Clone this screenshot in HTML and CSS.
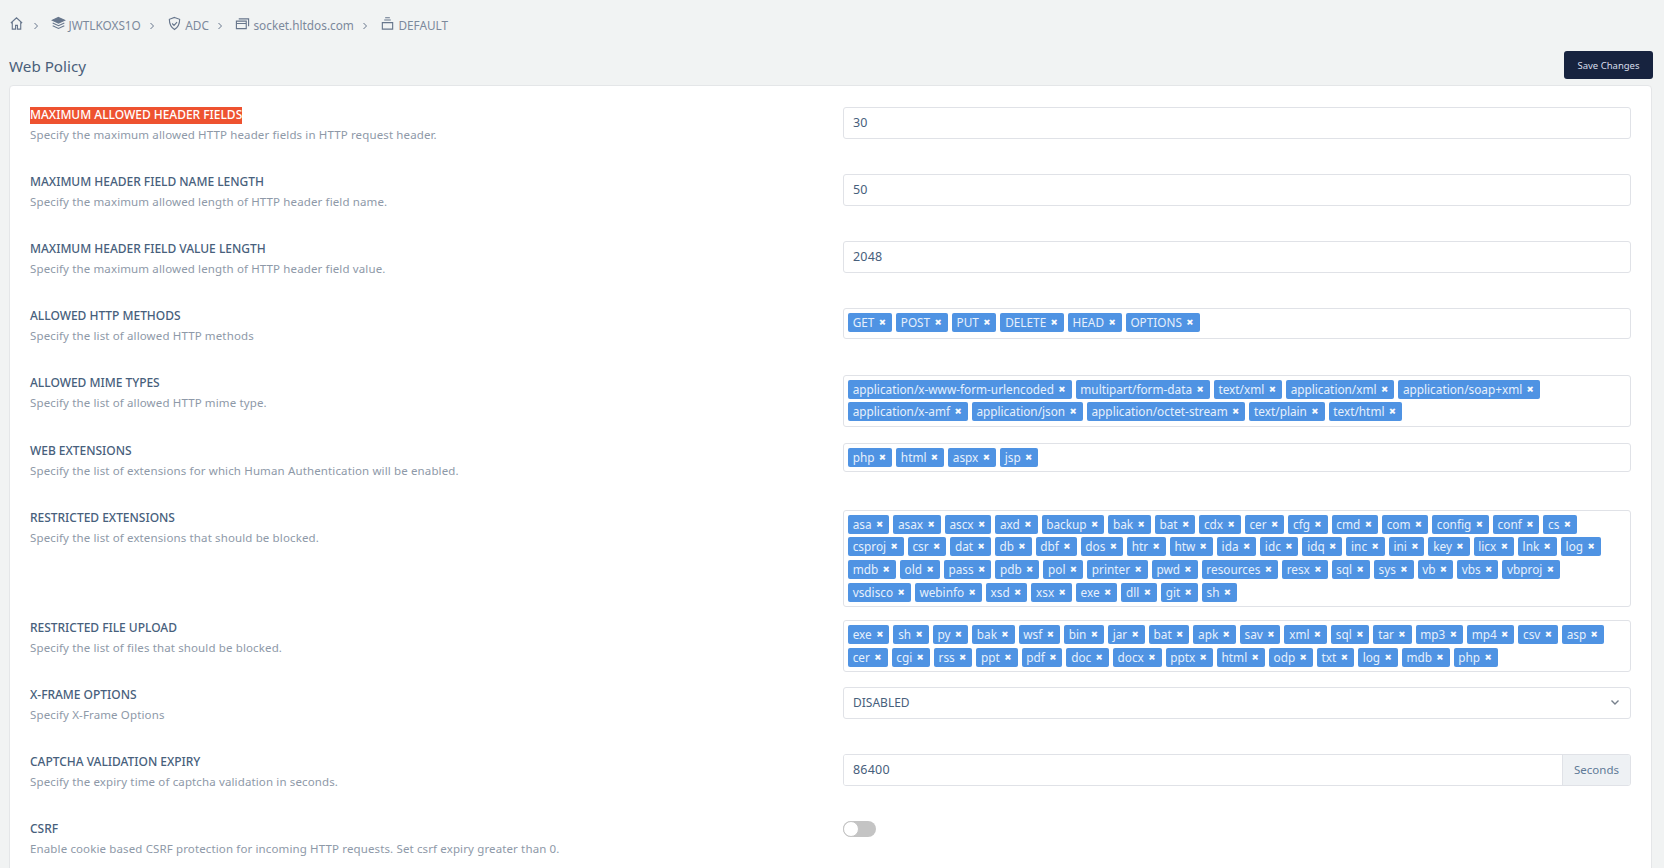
FILE: index.html
```html
<!DOCTYPE html>
<html lang="en">
<head>
<meta charset="utf-8">
<title>Web Policy</title>
<link rel="stylesheet" href="styles.css">
</head>
<body>
<nav class="crumbs">
  <svg class="ic home" viewBox="0 0 16 16"><path d="M2 7.500 8 2l6 5.500M3.500 6.500V14h3.500v-4h2v4h3.500V6.500"/></svg>
  <svg class="sep" viewBox="0 0 6 10"><path d="M1.500 2 4.500 5l-3 3"/></svg>
  <svg class="ic" viewBox="0 0 16 16"><path class="solid" d="M8 1.500 14.500 4.500 8 7.500 1.500 4.500Z"/><path d="M1.800 7.500 8 10.300l6.200-2.800M1.800 10.500 8 13.300l6.200-2.800"/></svg><span>JWTLKOXS1O</span>
  <svg class="sep" viewBox="0 0 6 10"><path d="M1.500 2 4.500 5l-3 3"/></svg>
  <svg class="ic" viewBox="0 0 16 16"><path d="M8 1.500 13.500 3.500c0 5-1.500 8.500-5.500 11-4-2.500-5.500-6-5.500-11ZM5.500 8 7.500 10l3.200-3.500"/></svg><span>ADC</span>
  <svg class="sep" viewBox="0 0 6 10"><path d="M1.500 2 4.500 5l-3 3"/></svg>
  <svg class="ic" viewBox="0 0 16 16"><path d="M1.500 5.500h10.500v8H1.500ZM1.500 8h10.500M4 3h10.500v8"/></svg><span>socket.hltdos.com</span>
  <svg class="sep" viewBox="0 0 6 10"><path d="M1.500 2 4.500 5l-3 3"/></svg>
  <svg class="ic" viewBox="0 0 16 16"><path d="M2.500 7h11v7h-11ZM4.500 4.300h7M5.500 1.800h5"/></svg><span>DEFAULT</span>
</nav>
<header class="head">
  <h1>Web Policy</h1>
  <button class="save">Save Changes</button>
</header>
<main class="card">
  <section class="row">
    <div class="info"><h2><mark>MAXIMUM ALLOWED HEADER FIELDS</mark></h2><p>Specify the maximum allowed HTTP header fields in HTTP request header.</p></div>
    <input class="input" value="30">
  </section>
  <section class="row">
    <div class="info"><h2>MAXIMUM HEADER FIELD NAME LENGTH</h2><p>Specify the maximum allowed length of HTTP header field name.</p></div>
    <input class="input" value="50">
  </section>
  <section class="row">
    <div class="info"><h2>MAXIMUM HEADER FIELD VALUE LENGTH</h2><p>Specify the maximum allowed length of HTTP header field value.</p></div>
    <input class="input" value="2048">
  </section>
  <section class="row">
    <div class="info"><h2>ALLOWED HTTP METHODS</h2><p>Specify the list of allowed HTTP methods</p></div>
    <div class="field tags tags-tall"><span class="tag">GET <b>×</b></span><span class="tag">POST <b>×</b></span><span class="tag">PUT <b>×</b></span><span class="tag">DELETE <b>×</b></span><span class="tag">HEAD <b>×</b></span><span class="tag">OPTIONS <b>×</b></span></div>
  </section>
  <section class="row">
    <div class="info"><h2>ALLOWED MIME TYPES</h2><p>Specify the list of allowed HTTP mime type.</p></div>
    <div class="field tags"><span class="tag">application/x-www-form-urlencoded <b>×</b></span><span class="tag">multipart/form-data <b>×</b></span><span class="tag">text/xml <b>×</b></span><span class="tag">application/xml <b>×</b></span><span class="tag">application/soap+xml <b>×</b></span><span class="tag">application/x-amf <b>×</b></span><span class="tag">application/json <b>×</b></span><span class="tag">application/octet-stream <b>×</b></span><span class="tag">text/plain <b>×</b></span><span class="tag">text/html <b>×</b></span></div>
  </section>
  <section class="row">
    <div class="info"><h2>WEB EXTENSIONS</h2><p>Specify the list of extensions for which Human Authentication will be enabled.</p></div>
    <div class="field tags"><span class="tag">php <b>×</b></span><span class="tag">html <b>×</b></span><span class="tag">aspx <b>×</b></span><span class="tag">jsp <b>×</b></span></div>
  </section>
  <section class="row row-tight">
    <div class="info"><h2>RESTRICTED EXTENSIONS</h2><p>Specify the list of extensions that should be blocked.</p></div>
    <div class="field tags"><span class="tag">asa <b>×</b></span><span class="tag">asax <b>×</b></span><span class="tag">ascx <b>×</b></span><span class="tag">axd <b>×</b></span><span class="tag">backup <b>×</b></span><span class="tag">bak <b>×</b></span><span class="tag">bat <b>×</b></span><span class="tag">cdx <b>×</b></span><span class="tag">cer <b>×</b></span><span class="tag">cfg <b>×</b></span><span class="tag">cmd <b>×</b></span><span class="tag">com <b>×</b></span><span class="tag">config <b>×</b></span><span class="tag">conf <b>×</b></span><span class="tag">cs <b>×</b></span><span class="tag">csproj <b>×</b></span><span class="tag">csr <b>×</b></span><span class="tag">dat <b>×</b></span><span class="tag">db <b>×</b></span><span class="tag">dbf <b>×</b></span><span class="tag">dos <b>×</b></span><span class="tag">htr <b>×</b></span><span class="tag">htw <b>×</b></span><span class="tag">ida <b>×</b></span><span class="tag">idc <b>×</b></span><span class="tag">idq <b>×</b></span><span class="tag">inc <b>×</b></span><span class="tag">ini <b>×</b></span><span class="tag">key <b>×</b></span><span class="tag">licx <b>×</b></span><span class="tag">lnk <b>×</b></span><span class="tag">log <b>×</b></span><span class="tag">mdb <b>×</b></span><span class="tag">old <b>×</b></span><span class="tag">pass <b>×</b></span><span class="tag">pdb <b>×</b></span><span class="tag">pol <b>×</b></span><span class="tag">printer <b>×</b></span><span class="tag">pwd <b>×</b></span><span class="tag">resources <b>×</b></span><span class="tag">resx <b>×</b></span><span class="tag">sql <b>×</b></span><span class="tag">sys <b>×</b></span><span class="tag">vb <b>×</b></span><span class="tag">vbs <b>×</b></span><span class="tag">vbproj <b>×</b></span><span class="tag">vsdisco <b>×</b></span><span class="tag">webinfo <b>×</b></span><span class="tag">xsd <b>×</b></span><span class="tag">xsx <b>×</b></span><span class="tag">exe <b>×</b></span><span class="tag">dll <b>×</b></span><span class="tag">git <b>×</b></span><span class="tag">sh <b>×</b></span></div>
  </section>
  <section class="row row-snug">
    <div class="info"><h2>RESTRICTED FILE UPLOAD</h2><p>Specify the list of files that should be blocked.</p></div>
    <div class="field tags"><span class="tag">exe <b>×</b></span><span class="tag">sh <b>×</b></span><span class="tag">py <b>×</b></span><span class="tag">bak <b>×</b></span><span class="tag">wsf <b>×</b></span><span class="tag">bin <b>×</b></span><span class="tag">jar <b>×</b></span><span class="tag">bat <b>×</b></span><span class="tag">apk <b>×</b></span><span class="tag">sav <b>×</b></span><span class="tag">xml <b>×</b></span><span class="tag">sql <b>×</b></span><span class="tag">tar <b>×</b></span><span class="tag">mp3 <b>×</b></span><span class="tag">mp4 <b>×</b></span><span class="tag">csv <b>×</b></span><span class="tag">asp <b>×</b></span><span class="tag">cer <b>×</b></span><span class="tag">cgi <b>×</b></span><span class="tag">rss <b>×</b></span><span class="tag">ppt <b>×</b></span><span class="tag">pdf <b>×</b></span><span class="tag">doc <b>×</b></span><span class="tag">docx <b>×</b></span><span class="tag">pptx <b>×</b></span><span class="tag">html <b>×</b></span><span class="tag">odp <b>×</b></span><span class="tag">txt <b>×</b></span><span class="tag">log <b>×</b></span><span class="tag">mdb <b>×</b></span><span class="tag">php <b>×</b></span></div>
  </section>
  <section class="row">
    <div class="info"><h2>X-FRAME OPTIONS</h2><p>Specify X-Frame Options</p></div>
    <div class="field select"><span>DISABLED</span><svg class="chev" viewBox="0 0 12 12"><path d="M2.500 4.500 6 8l3.500-3.500"/></svg></div>
  </section>
  <section class="row">
    <div class="info"><h2>CAPTCHA VALIDATION EXPIRY</h2><p>Specify the expiry time of captcha validation in seconds.</p></div>
    <div class="field group"><input class="input bare" value="86400"><span class="addon">Seconds</span></div>
  </section>
  <section class="row">
    <div class="info"><h2>CSRF</h2><p>Enable cookie based CSRF protection for incoming HTTP requests. Set csrf expiry greater than 0.</p></div>
    <div class="toggle"><span class="knob"></span></div>
  </section>
</main>
</body>
</html>
```

FILE: styles.css
```css
* { box-sizing: border-box; }
html, body { margin: 0; height: 868px; overflow: hidden; }
body {
  background: #f1f3f3;
  font-family: "Noto Sans", "Open Sans", sans-serif;
  color: #47607c;
  font-size: 12px;
  padding: 0 12px 0 9px;
}
.crumbs {
  height: 50px;
  display: flex;
  align-items: center;
  color: #7c899c;
  font-size: 11.800px;
}
.ic {
  width: 15px;
  height: 15px;
  margin-right: 3px;
  margin-top: -3px;
  fill: none;
  stroke: #67768c;
  stroke-width: 1.200;
}
.ic.home { margin-right: 0; }
.ic .solid { fill: #67768c; }
.sep {
  width: 6px;
  height: 10px;
  margin: 1px 12px 0 8.500px;
  fill: none;
  stroke: #67768c;
  stroke-width: 1;
}
.head {
  height: 35px;
  display: flex;
  justify-content: space-between;
  align-items: flex-start;
}
h1 {
  margin: 6px 0 0;
  font-size: 15.200px;
  line-height: 20px;
  font-weight: 400;
  color: #4a5f7a;
}
.save {
  margin-right: -1px;
  margin-top: 1px;
  width: 89px;
  height: 28px;
  padding: 0;
  border: 0;
  border-radius: 3px;
  background: #17233f;
  color: #d7deea;
  font: 400 9.500px "Noto Sans", sans-serif;
}
.card {
  background: #fff;
  border: 1px solid #e4e6e8;
  border-radius: 4px;
  padding: 21px 20px 0;
  height: 800px;
}
.row {
  display: grid;
  grid-template-columns: 813px 1fr;
  align-items: start;
  min-height: 51px;
  margin-bottom: 16px;
}
.row-tight { margin-bottom: 13px; }
.row-snug { margin-bottom: 15px; }
.info { height: 51px; }
h2 {
  margin: 0;
  height: 16px;
  font-size: 12px;
  line-height: 16px;
  font-weight: 500;
  letter-spacing: -0.020px;
  color: #47607c;
}
mark { background: #ee5230; color: #fff; display: inline-block; height: 17px; }
p {
  margin: 4px 0 0;
  font-size: 11.500px;
  letter-spacing: 0.130px;
  line-height: 16px;
  color: #8e99a8;
}
.field {
  border: 1px solid #e0e2e7;
  border-radius: 3px;
}
input.input {
  display: block;
  width: 100%;
  height: 32px;
  margin: 0;
  padding: 0 9px 1px;
  border: 1px solid #e0e2e7;
  border-radius: 3px;
  font: 12.500px "Noto Sans", sans-serif;
  letter-spacing: 0.200px;
  color: #47607c;
  outline: 0;
}
.tags {
  display: flex;
  flex-wrap: wrap;
  gap: 3.670px 4px;
  padding: 3.670px 20px 4.670px 4px;
}
.tags-tall { min-height: 30.500px; }
.tag {
  height: 19px;
  padding: 0 6.500px 1px 4.700px;
  display: inline-flex;
  align-items: center;
  gap: 1.800px;
  background: #4f93e3;
  border-radius: 2px;
  color: #e6f0fc;
  font-size: 11.800px;
  line-height: 18px;
  white-space: pre;
}
.tag b {
  font-weight: 700;
  color: #fff;
  font-size: 11px;
  -webkit-text-stroke: 0.500px #fff;
}
.select {
  height: 32px;
  padding: 0 9px 2px;
  display: flex;
  align-items: center;
  justify-content: space-between;
  font-size: 12px;
}
.chev { width: 12px; height: 12px; fill: none; stroke: #77808c; stroke-width: 1.400; }
.group {
  display: flex;
  height: 32px;
  overflow: hidden;
}
input.bare { border: 0; height: 30px; flex: 1; border-radius: 0; }
.addon {
  width: 68px;
  border-left: 1px solid #e0e2e7;
  background: #eef1f4;
  color: #5f7a97;
  font-size: 11.500px;
  line-height: 29px;
  text-align: center;
}
.toggle {
  width: 33px;
  height: 16px;
  background: #c4c4c4;
  border-radius: 8px;
  position: relative;
}
.knob {
  position: absolute;
  left: 0;
  top: 0;
  width: 16px;
  height: 16px;
  border-radius: 50%;
  background: #fff;
  border: 1px solid #c4c4c4;
}
```
